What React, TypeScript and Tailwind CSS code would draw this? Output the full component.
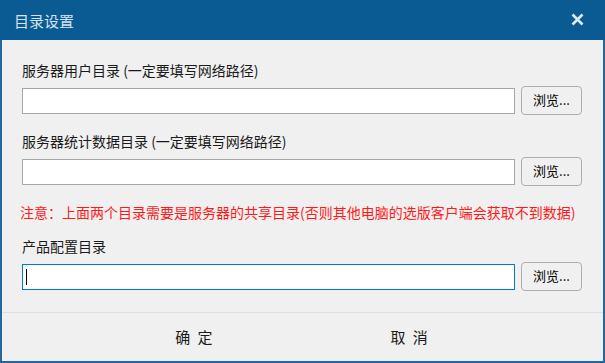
import React from "react";

const font = { fontFamily: '"Noto Sans CJK SC", "Noto Sans", sans-serif' };

function PathRow({ focused }: { focused?: boolean }) {
    return (
        <div className="flex items-center gap-[6px] h-[29px]">
            <div
                className={
                    "relative flex-1 h-[26px] bg-white border " +
                    (focused ? "border-[#0078d7]" : "border-[#a6a6a6]")
                }
            >
                {focused && <span className="absolute left-[3px] top-[4px] w-px h-[16px] bg-black" />}
            </div>
            <button className="w-[61px] h-[29px] rounded-[4px] border border-[#adadad] bg-[#f0f0f0] text-[13px] text-black leading-none pb-[2px]">
                浏览...
            </button>
        </div>
    );
}

export default function App() {
    return (
        <div
            className="w-[605px] h-[363px] flex flex-col border-2 border-t-0 border-[#2466a0] bg-[#f0f0f0]"
            style={font}
        >
            {/* title bar */}
            <div className="h-[40px] -mx-[2px] px-[14px] pt-[3px] flex items-center justify-between bg-[#0a5a94]">
                <span className="text-[15px] text-[#d6e2ee]">目录设置</span>
                <svg width="13" height="13" viewBox="0 0 13 13" className="mr-[7px] -mt-[4px]">
                    <path d="M1.5 1.5 L11.5 11.5 M11.5 1.5 L1.5 11.5" stroke="#dfe8f1" strokeWidth="2.6" />
                </svg>
            </div>

            {/* body */}
            <div className="flex flex-col pl-[20px] pr-[21px] pt-[20px] text-[14px] leading-[20px] text-[#1a1a1a]">
                <div>服务器用户目录 (一定要填写网络路径)</div>
                <div className="mt-[6px]">
                    <PathRow />
                </div>
                <div className="mt-[16px]">服务器统计数据目录 (一定要填写网络路径)</div>
                <div className="mt-[6px]">
                    <PathRow />
                </div>
                <div className="mt-[16px] -ml-[2px] text-[#ff1a1a] whitespace-nowrap">
                    注意：上面两个目录需要是服务器的共享目录(否则其他电脑的选版客户端会获取不到数据)
                </div>
                <div className="mt-[14px]">产品配置目录</div>
                <div className="mt-[6px]">
                    <PathRow focused />
                </div>
            </div>

            {/* footer */}
            <div className="mt-auto h-[49px] border-t border-[#dedede] flex items-center justify-center gap-[176px] text-[15px] text-[#1a1a1a]">
                <span className="tracking-[2px]">确 定</span>
                <span className="tracking-[2px]">取 消</span>
            </div>
        </div>
    );
}
